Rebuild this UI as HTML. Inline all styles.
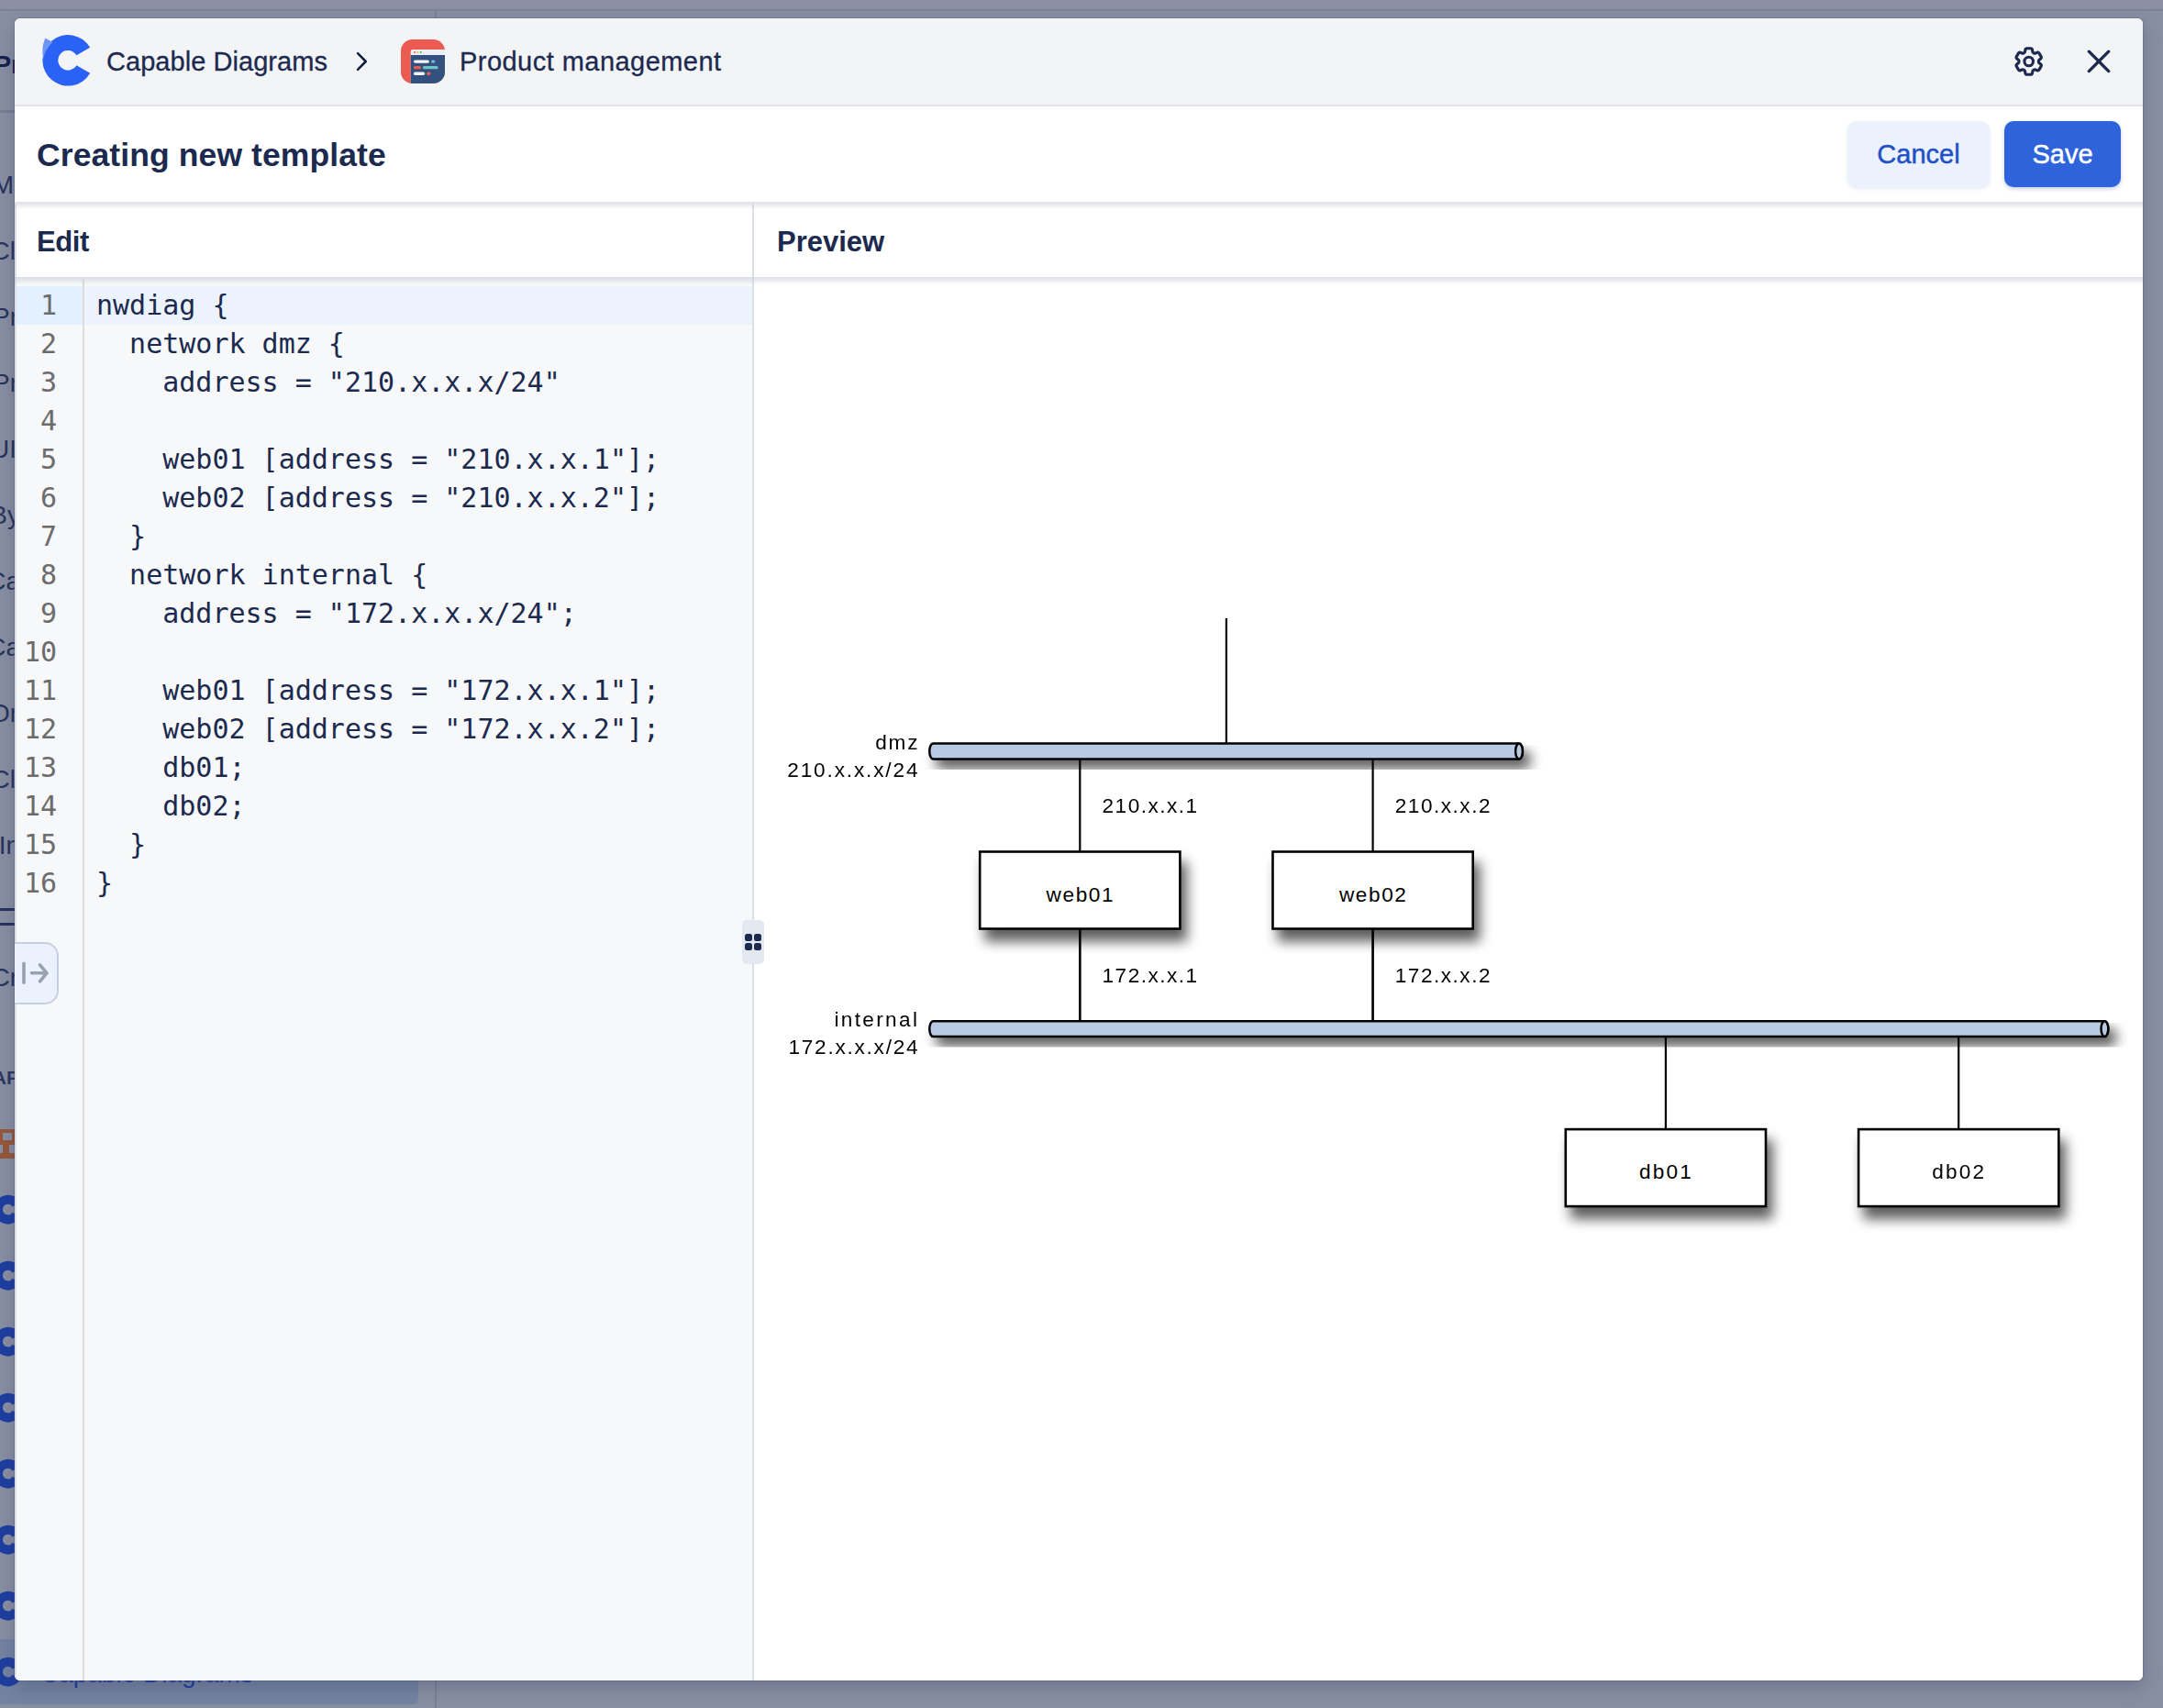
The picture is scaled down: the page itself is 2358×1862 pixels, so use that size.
<!DOCTYPE html>
<html lang="en">
<head>
<meta charset="utf-8">
<title>Creating new template</title>
<style>
*{box-sizing:border-box;margin:0;padding:0}
html,body{width:2358px;height:1862px;overflow:hidden}
body{position:relative;background:#898fa3;font-family:"Liberation Sans",sans-serif;color:#1b2a4e}
.abs{position:absolute}
/* backdrop */
#bg{left:0;top:0;width:2358px;height:1862px;overflow:hidden}
#bg .t{position:absolute;white-space:nowrap}
/* modal */
#modal{left:16px;top:20px;width:2320px;height:1812px;background:#fff;border-radius:6px;overflow:hidden;box-shadow:0 0 0 1px rgba(70,80,115,.25),0 8px 20px rgba(40,48,80,.28)}
#hdr{left:0;top:0;width:2320px;height:96px;background:#f3f4f6;border-bottom:2px solid #e3e5ea}
#hdr .lbl{-webkit-text-stroke:.3px currentColor;position:absolute;top:29px;font-size:29px;line-height:36px;color:#1b2a4e;white-space:nowrap}
#titlebar{left:0;top:96px;width:2320px;height:104px;background:#fff}
#title{left:24px;top:45px;font-size:35.5px;letter-spacing:.1px;line-height:40px;font-weight:bold;white-space:nowrap;color:#1b2a4e}
.btn{-webkit-text-stroke:.45px currentColor;position:absolute;top:16px;height:72px;border-radius:10px;font-size:29px;line-height:72px;text-align:center}
#cancel{left:1998px;width:155px;background:#ebf1fd;color:#1f50c4;box-shadow:0 2px 4px rgba(30,60,140,.10)}
#save{left:2169px;width:127px;background:#2e63dc;color:#fff;box-shadow:0 2px 4px rgba(30,60,140,.25)}
#sep1{z-index:3;left:0;top:200px;width:2320px;height:8px;background:linear-gradient(rgba(190,196,210,.50) 0,rgba(190,196,210,.42) 2px,rgba(190,196,210,0) 8px)}
#panehdr{left:0;top:200px;width:2320px;height:82px;background:#fff}
#panehdr .h{position:absolute;top:26px;font-size:31px;line-height:36px;font-weight:bold;color:#1b2a4e}
#sep2{z-index:3;left:0;top:282px;width:2320px;height:8px;background:linear-gradient(rgba(190,196,210,.50) 0,rgba(190,196,210,.42) 2px,rgba(190,196,210,0) 8px)}
/* editor */
#editor{left:0;top:282px;width:804px;height:1530px;background:#f6f8fa;font-family:"DejaVu Sans Mono","Liberation Mono",monospace;font-size:30px;line-height:42px}
#gutter{left:0;top:2px;width:76px;height:1528px;border-right:2px solid #dddddd;background:#f6f8fa}
#activeg{left:0;top:10px;width:74px;height:42px;background:#e2f0ff}
#activel{left:76px;top:10px;width:728px;height:42px;background:#ecf3fc}
#nums{left:1px;top:10px;width:45px;text-align:right;color:#6c6c6c;white-space:pre}
#code{left:89px;top:10px;color:#1b2a4e;white-space:pre}
#divider{left:804px;top:203px;width:2px;height:1609px;background:#dcdfe6}
#handle{left:793px;top:983px;width:24px;height:48px;border-radius:5px;background:#e3e8f1}
#handle i{position:absolute;width:8px;height:8px;border-radius:2.5px;background:#1b2a4e}
#collapse{left:-2px;top:1007px;width:50px;height:68px;border:2px solid #c6cfe2;border-radius:0 15px 15px 0;background:#ebf1fd}
#preview{left:806px;top:284px;width:1514px;height:1528px;background:#fff}
</style>
</head>
<body>
<div id="bg" class="abs">
<div class="abs" style="left:0;top:0;width:2358px;height:10px;background:#8b90a4"></div>
<div class="abs" style="left:0;top:10px;width:2358px;height:2px;background:#7c8398"></div>
<div class="abs" style="left:474px;top:12px;width:2px;height:1850px;background:#7a8197"></div>
<div class="abs" style="left:0;top:120px;width:474px;height:3px;background:#767e95"></div>
<div class="abs" style="left:0;top:1787px;width:456px;height:71px;border-radius:0 6px 6px 0;background:#7583a2"></div>
<div class="t" style="right:2335px;top:57px;font-size:28px;line-height:28px;font-weight:bold;color:#14224a">Pr</div>
<div class="t" style="right:2343px;top:188px;font-size:28px;line-height:28px;font-weight:normal;color:#26345a">M</div>
<div class="t" style="right:2341px;top:260px;font-size:28px;line-height:28px;font-weight:normal;color:#26345a">Cl</div>
<div class="t" style="right:2338px;top:332px;font-size:28px;line-height:28px;font-weight:normal;color:#26345a">Pr</div>
<div class="t" style="right:2338px;top:404px;font-size:28px;line-height:28px;font-weight:normal;color:#26345a">Pr</div>
<div class="t" style="right:2340px;top:476px;font-size:28px;line-height:28px;font-weight:normal;color:#26345a">UI</div>
<div class="t" style="right:2336px;top:548px;font-size:28px;line-height:28px;font-weight:normal;color:#26345a">By</div>
<div class="t" style="right:2336px;top:620px;font-size:28px;line-height:28px;font-weight:normal;color:#26345a">Ca</div>
<div class="t" style="right:2336px;top:692px;font-size:28px;line-height:28px;font-weight:normal;color:#26345a">Ca</div>
<div class="t" style="right:2338px;top:764px;font-size:28px;line-height:28px;font-weight:normal;color:#26345a">Or</div>
<div class="t" style="right:2341px;top:836px;font-size:28px;line-height:28px;font-weight:normal;color:#26345a">Cl</div>
<div class="t" style="right:2336px;top:908px;font-size:28px;line-height:28px;font-weight:normal;color:#26345a">In</div>
<div class="t" style="right:2338px;top:1052px;font-size:28px;line-height:28px;font-weight:normal;color:#26345a">Cr</div>
<div class="t" style="right:2337px;top:1164px;font-size:21px;line-height:21px;font-weight:bold;color:#2a3860">AP</div>
<div class="abs" style="left:-6px;top:990px;width:22px;height:3px;background:#26345a"></div><div class="abs" style="left:-6px;top:1006px;width:22px;height:3px;background:#26345a"></div>
<div class="abs" style="left:-16px;top:1231px;width:32px;height:32px;background:#96583a"><div class="abs" style="left:19px;top:4px;width:10px;height:8px;border-radius:1px;background:#8a90a6"></div><div class="abs" style="left:12px;top:17px;width:7px;height:9px;background:#8a90a6"></div><div class="abs" style="left:26px;top:17px;width:7px;height:9px;background:#8a90a6"></div></div>
<svg class="abs" style="left:0;top:1290px" width="40" height="572" viewBox="0 1290 40 572"><path d="M22.2,1310.2 A15.8,15.8 0 1 0 22.2,1327.0 L13.8,1321.7 A5.9,5.9 0 1 1 13.8,1315.5 Z" fill="#1e3ea0"/><path d="M22.2,1382.2 A15.8,15.8 0 1 0 22.2,1399.0 L13.8,1393.7 A5.9,5.9 0 1 1 13.8,1387.5 Z" fill="#1e3ea0"/><path d="M22.2,1454.2 A15.8,15.8 0 1 0 22.2,1471.0 L13.8,1465.7 A5.9,5.9 0 1 1 13.8,1459.5 Z" fill="#1e3ea0"/><path d="M22.2,1526.2 A15.8,15.8 0 1 0 22.2,1543.0 L13.8,1537.7 A5.9,5.9 0 1 1 13.8,1531.5 Z" fill="#1e3ea0"/><path d="M22.2,1598.2 A15.8,15.8 0 1 0 22.2,1615.0 L13.8,1609.7 A5.9,5.9 0 1 1 13.8,1603.5 Z" fill="#1e3ea0"/><path d="M22.2,1670.2 A15.8,15.8 0 1 0 22.2,1687.0 L13.8,1681.7 A5.9,5.9 0 1 1 13.8,1675.5 Z" fill="#1e3ea0"/><path d="M22.2,1742.2 A15.8,15.8 0 1 0 22.2,1759.0 L13.8,1753.7 A5.9,5.9 0 1 1 13.8,1747.5 Z" fill="#1e3ea0"/><path d="M22.2,1814.2 A15.8,15.8 0 1 0 22.2,1831.0 L13.8,1825.7 A5.9,5.9 0 1 1 13.8,1819.5 Z" fill="#1e3ea0"/></svg>
<div class="t" style="left:44px;top:1811px;font-size:28px;line-height:28px;color:#1e3ea0">Capable Diagrams</div>
</div>
<div id="modal" class="abs">
  <div id="hdr" class="abs">
    <svg class="abs" style="left:0;top:0" width="2320" height="96" viewBox="16 20 2320 96">
      <!-- logo C : annular sector -->
      <path d="M98.2,51.8 A27.8,27.8 0 1 0 98.2,79.8 L83.4,71.2 A10.8,10.8 0 1 1 83.4,60.3 Z" fill="#2962f4"/>
      <path d="M49.4,41.6 L57.5,46 Q49,54 47.3,64 Q44.6,52 49.4,41.6 Z" fill="#6d95f6"/>
      <!-- chevron -->
      <path d="M390,58.1 L398.8,67 L390,75.9" fill="none" stroke="#0f1d40" stroke-width="2.5" stroke-linecap="round" stroke-linejoin="round"/>
      <!-- product icon -->
      <clipPath id="pic"><rect x="437" y="43" width="48" height="48" rx="12.5" ry="12.5"/></clipPath>
      <g clip-path="url(#pic)">
        <rect x="437" y="43" width="48" height="48" fill="#eb5b51"/>
        <rect x="447.7" y="54" width="40" height="40" rx="2" fill="#ebeff8"/>
        <rect x="447.7" y="60" width="40" height="34" fill="#34507f"/>
        <circle cx="452" cy="57" r="1.05" fill="#ee5a4f"/><circle cx="455.4" cy="57" r="1.05" fill="#f2b233"/><circle cx="458.7" cy="57" r="1.05" fill="#3ec24a"/>
        <rect x="450.9" y="65.4" width="17" height="3.3" rx="1.65" fill="#f4f6fa"/>
        <rect x="470" y="65.4" width="4.4" height="3.3" rx="1.65" fill="#6fb3e8"/>
        <rect x="450.9" y="72" width="8" height="3.3" rx="1.65" fill="#ee5a4f"/>
        <rect x="460.9" y="72" width="16.8" height="3.3" rx="1.65" fill="#6ec4c4"/>
        <rect x="450.9" y="78.6" width="12.2" height="3.3" rx="1.65" fill="#f4f6fa"/>
        <rect x="465.2" y="78.6" width="4.2" height="3.3" rx="1.65" fill="#fb5b4b"/>
      </g>
      <!-- gear (cog-6-tooth) -->
      <g transform="translate(2192.7,48) scale(1.583)" fill="none" stroke="#1b2a4e" stroke-width="2" stroke-linecap="round" stroke-linejoin="round">
        <path d="M9.594 3.94c.09-.542.56-.94 1.11-.94h2.593c.55 0 1.02.398 1.11.94l.213 1.281c.063.374.313.686.645.87.074.04.147.083.22.127.324.196.72.257 1.075.124l1.217-.456a1.125 1.125 0 011.37.49l1.296 2.247a1.125 1.125 0 01-.26 1.431l-1.003.827c-.293.24-.438.613-.431.992a6.759 6.759 0 010 .255c-.007.378.138.75.43.99l1.005.828c.424.35.534.954.26 1.43l-1.298 2.247a1.125 1.125 0 01-1.369.491l-1.217-.456c-.355-.133-.75-.072-1.076.124a6.57 6.57 0 01-.22.128c-.331.183-.581.495-.644.869l-.213 1.28c-.09.543-.56.941-1.11.941h-2.594c-.55 0-1.02-.398-1.11-.94l-.213-1.281c-.062-.374-.312-.686-.644-.87a6.52 6.52 0 01-.22-.127c-.325-.196-.72-.257-1.076-.124l-1.217.456a1.125 1.125 0 01-1.369-.49l-1.297-2.247a1.125 1.125 0 01.26-1.431l1.004-.827c.292-.24.437-.613.43-.992a6.932 6.932 0 010-.255c.007-.378-.138-.75-.43-.99l-1.004-.828a1.125 1.125 0 01-.26-1.43l1.297-2.247a1.125 1.125 0 011.37-.491l1.216.456c.356.133.751.072 1.076-.124.072-.044.146-.087.22-.128.332-.183.582-.495.644-.869l.214-1.281z"/>
        <path d="M15 12a3 3 0 11-6 0 3 3 0 016 0z"/>
      </g>
      <!-- close -->
      <path d="M2277.3,56.2 L2298.7,77.6 M2298.7,56.2 L2277.3,77.6" fill="none" stroke="#1b2a4e" stroke-width="3.3" stroke-linecap="round"/>
    </svg>

    <span class="lbl" style="left:100px;letter-spacing:.05px">Capable Diagrams</span>
    <span class="lbl" style="left:485px;letter-spacing:.46px">Product management</span>
  </div>
  <div id="titlebar" class="abs">
    <div id="title" class="abs" style="top:33px">Creating new template</div>
    <div id="cancel" class="btn">Cancel</div>
    <div id="save" class="btn">Save</div>
  </div>
  <div id="sep1" class="abs"></div>
  <div id="panehdr" class="abs">
    <span class="h" style="left:24px;letter-spacing:-.4px">Edit</span>
    <span class="h" style="left:831px;letter-spacing:0">Preview</span>
  </div>
  <div id="sep2" class="abs"></div>
  <div id="editor" class="abs">
    <div id="gutter" class="abs"></div>
    <div id="activeg" class="abs"></div>
    <div id="activel" class="abs"></div>
<div id="nums" class="abs">1
2
3
4
5
6
7
8
9
10
11
12
13
14
15
16</div>
<div id="code" class="abs">nwdiag {
  network dmz {
    address = "210.x.x.x/24"

    web01 [address = "210.x.x.1"];
    web02 [address = "210.x.x.2"];
  }
  network internal {
    address = "172.x.x.x/24";

    web01 [address = "172.x.x.1"];
    web02 [address = "172.x.x.2"];
    db01;
    db02;
  }
}</div>
  </div>
  <div id="preview" class="abs">
<svg class="abs" style="left:0;top:0;filter:blur(.55px)" width="1514" height="1528" viewBox="822 304 1514 1528" font-family="'Liberation Sans',sans-serif" font-size="22.6" letter-spacing="1.5" fill="#000">
<defs><filter id="blur" filterUnits="userSpaceOnUse" x="822" y="304" width="1514" height="1528"><feGaussianBlur stdDeviation="6.9"/></filter></defs>
<clipPath id="ct1"><rect x="1000.1" y="812.3" width="687.1" height="26.7"/></clipPath>
<g clip-path="url(#ct1)"><path d="M1017.2,810.5 L1656.0,810.5 A3.9,8.45 0 0 1 1656.0,827.5 L1017.2,827.5 A3.9,8.45 0 0 1 1017.2,810.5 Z" transform="translate(7.6,9.2)" fill="#000" stroke="#000" stroke-width="2.5" opacity="0.66" filter="url(#blur)"/></g>
<path d="M1017.2,810.5 L1656.0,810.5 A3.9,8.45 0 0 1 1656.0,827.5 L1017.2,827.5 A3.9,8.45 0 0 1 1017.2,810.5 Z" fill="#b9cbe4" stroke="#000" stroke-width="2.5"/>
<ellipse cx="1656.0" cy="819.0" rx="3.9" ry="8.45" fill="#b9cbe4" stroke="#000" stroke-width="2.5"/>
<clipPath id="ct2"><rect x="1000.1" y="1114.9" width="1325.5" height="26.7"/></clipPath>
<g clip-path="url(#ct2)"><path d="M1017.2,1113.2 L2294.4,1113.2 A3.9,8.45 0 0 1 2294.4,1130.1 L1017.2,1130.1 A3.9,8.45 0 0 1 1017.2,1113.2 Z" transform="translate(7.6,9.2)" fill="#000" stroke="#000" stroke-width="2.5" opacity="0.66" filter="url(#blur)"/></g>
<path d="M1017.2,1113.2 L2294.4,1113.2 A3.9,8.45 0 0 1 2294.4,1130.1 L1017.2,1130.1 A3.9,8.45 0 0 1 1017.2,1113.2 Z" fill="#b9cbe4" stroke="#000" stroke-width="2.5"/>
<ellipse cx="2294.4" cy="1121.6" rx="3.9" ry="8.45" fill="#b9cbe4" stroke="#000" stroke-width="2.5"/>
<path d="M1336.9,674.0 V810.5" stroke="#000" stroke-width="2.2" fill="none"/>
<path d="M1177.3,828.0 V928.5" stroke="#000" stroke-width="2.2" fill="none"/>
<path d="M1177.3,1013.0 V1112.5" stroke="#000" stroke-width="2.2" fill="none"/>
<path d="M1496.6,828.0 V928.5" stroke="#000" stroke-width="2.2" fill="none"/>
<path d="M1496.6,1013.0 V1112.5" stroke="#000" stroke-width="2.2" fill="none"/>
<path d="M1815.9,1130.5 V1231.0" stroke="#000" stroke-width="2.2" fill="none"/>
<path d="M2135.2,1130.5 V1231.0" stroke="#000" stroke-width="2.2" fill="none"/>
<clipPath id="cn1"><rect x="1055.9" y="918.2" width="254.3" height="123.6"/></clipPath>
<g clip-path="url(#cn1)"><rect x="1073.2" y="939.8" width="220.8" height="86.6" fill="#000" opacity="0.635" filter="url(#blur)"/></g>
<rect x="1068.2" y="928.5" width="218.2" height="84.0" fill="#fff" stroke="#000" stroke-width="2.6"/>
<text x="1177.9" y="982.8" text-anchor="middle" letter-spacing="1.6">web01</text>
<clipPath id="cn2"><rect x="1375.2" y="918.2" width="254.3" height="123.6"/></clipPath>
<g clip-path="url(#cn2)"><rect x="1392.5" y="939.8" width="220.8" height="86.6" fill="#000" opacity="0.635" filter="url(#blur)"/></g>
<rect x="1387.5" y="928.5" width="218.2" height="84.0" fill="#fff" stroke="#000" stroke-width="2.6"/>
<text x="1497.2" y="982.8" text-anchor="middle" letter-spacing="1.6">web02</text>
<clipPath id="cn3"><rect x="1694.5" y="1220.8" width="254.3" height="123.6"/></clipPath>
<g clip-path="url(#cn3)"><rect x="1711.8" y="1242.4" width="220.8" height="86.6" fill="#000" opacity="0.635" filter="url(#blur)"/></g>
<rect x="1706.8" y="1231.1" width="218.2" height="84.0" fill="#fff" stroke="#000" stroke-width="2.6"/>
<text x="1816.5" y="1285.4" text-anchor="middle" letter-spacing="2.2">db01</text>
<clipPath id="cn4"><rect x="2013.8" y="1220.8" width="254.3" height="123.6"/></clipPath>
<g clip-path="url(#cn4)"><rect x="2031.1" y="1242.4" width="220.8" height="86.6" fill="#000" opacity="0.635" filter="url(#blur)"/></g>
<rect x="2026.1" y="1231.1" width="218.2" height="84.0" fill="#fff" stroke="#000" stroke-width="2.6"/>
<text x="2135.8" y="1285.4" text-anchor="middle" letter-spacing="2.2">db02</text>
<path d="M1177.3,1013.0 V1112.5" stroke="#000" stroke-width="2.2" fill="none"/>
<path d="M1496.6,1013.0 V1112.5" stroke="#000" stroke-width="2.2" fill="none"/>
<text x="1002.3" y="816.7" text-anchor="end" letter-spacing="1.8">dmz</text>
<text x="1002.3" y="846.7" text-anchor="end" letter-spacing="1.85">210.x.x.x/24</text>
<text x="1002.3" y="1119.3" text-anchor="end" letter-spacing="2.35">internal</text>
<text x="1002.3" y="1149.3" text-anchor="end" letter-spacing="1.75">172.x.x.x/24</text>
<text x="1201.5" y="885.8">210.x.x.1</text>
<text x="1520.8" y="885.8">210.x.x.2</text>
<text x="1201.5" y="1070.8">172.x.x.1</text>
<text x="1520.8" y="1070.8">172.x.x.2</text>
</svg>
</div>
  <div id="divider" class="abs"></div>
  <div class="abs" style="left:0;top:203px;width:2px;height:1609px;background:#dde0e8"></div>
  <div id="handle" class="abs"><i style="left:3px;top:15px"></i><i style="left:13px;top:15px"></i><i style="left:3px;top:25px"></i><i style="left:13px;top:25px"></i></div>
  <div id="collapse" class="abs"><svg class="abs" style="left:0;top:0" width="50" height="68" viewBox="14 1027 50 68"><path d="M24,1048.3 V1069.3 M32.5,1058.8 H48 M41.5,1049.8 L49,1058.8 L41.5,1067.8" fill="none" stroke="#9aa1ae" stroke-width="3.6" stroke-linecap="round" stroke-linejoin="round"/></svg></div>
</div>
</body>
</html>
